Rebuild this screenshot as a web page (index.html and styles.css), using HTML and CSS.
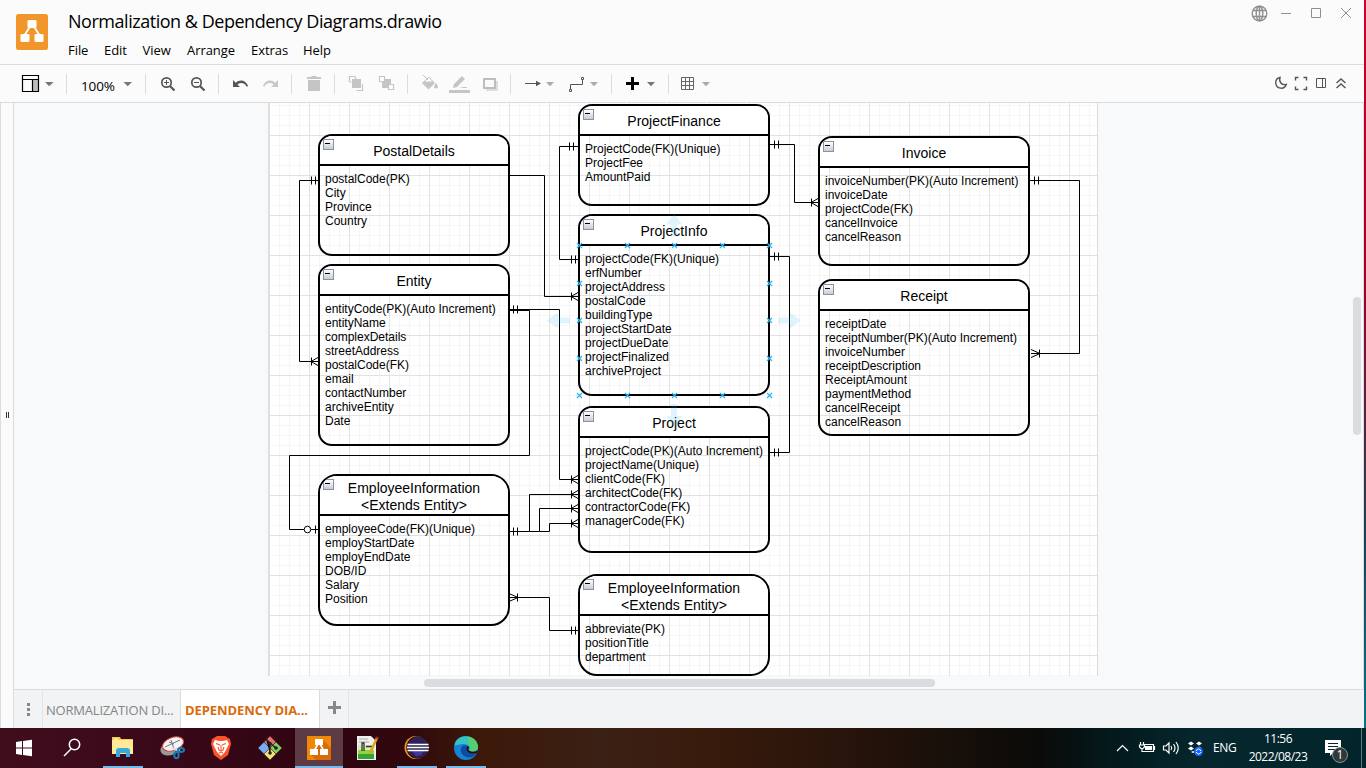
FILE: index.html
```html
<!DOCTYPE html>
<html lang="en">
<head>
<meta charset="utf-8">
<title>Normalization &amp; Dependency Diagrams.drawio</title>
<link rel="stylesheet" href="styles.css">
</head>
<body>
<div class="desktop">
<div class="window">
  <header class="header">
    <svg class="app-logo" width="32" height="36" viewBox="0 0 32 36"><rect width="32" height="36" rx="2.5" fill="#f2962b"/><path d="M15 11 8 22M17 11l7 11" stroke="#fff" stroke-width="1.8"/><rect x="11.5" y="6" width="9" height="8" rx="1.3" fill="#fff"/><rect x="4.500" y="20" width="9" height="8" rx="1.300" fill="#fff"/><rect x="18.500" y="20" width="9" height="8" rx="1.300" fill="#fff"/></svg>
    <div class="heading">
      <div class="doc-title">Normalization &amp; Dependency Diagrams.drawio</div>
      <nav class="menu"><span>File</span><span>Edit</span><span>View</span><span>Arrange</span><span>Extras</span><span>Help</span></nav>
    </div>
    <svg class="window-controls" width="114" height="30" viewBox="1250 0 114 30" fill="none" stroke="#8f8f8f">
      <g stroke-width="1.400"><circle cx="1259.500" cy="13.500" r="7.300"/><ellipse cx="1259.500" cy="13.500" rx="3.300" ry="7.300"/><path d="M1259.500 6v15M1253 10.500h13M1253 16.500h13"/></g>
      <path d="M1281 13.500h10M1311.500 8.500h9v9h-9zM1341 8l10 10M1351 8l-10 10"/>
    </svg>
  </header>

  <div class="toolbar">
    <div class="tool-group"><svg width="66" height="37" viewBox="0 65 66 37"><path d="M33 80h5v11h-5z" fill="#bbb"/><path d="M22.500 75.500h16v16h-16zM22.500 79.500h16M32.500 79.500v12" fill="none" stroke="#000" stroke-width="1.200"/><path d="m45 82 4.200 4.300L53.500 82z" fill="#777"/></svg></div>
    <div class="tool-group zoom-group"><span class="zoom-value">100%</span><svg width="20" height="37" viewBox="118 65 20 37"><path d="m123.500 82 4.200 4.300L132 82z" fill="#777"/></svg></div>
    <div class="tool-group"><svg width="72" height="37" viewBox="146 65 72 37" fill="none" stroke="#555"><g stroke-width="1.700"><circle cx="166.500" cy="82.500" r="4.700"/><path d="m170 86 4.500 4.500" stroke-width="2.200"/><path d="M164 82.500h5M166.500 80v5" stroke-width="1"/><circle cx="196.500" cy="82.500" r="4.700"/><path d="m200 86 4.500 4.500" stroke-width="2.200"/><path d="M194 82.500h5" stroke-width="1"/></g></svg></div>
    <div class="tool-group"><svg width="72" height="37" viewBox="219 65 72 37"><path d="M233 80v7h7l-2.600-2.600c3.400-2.500 7.400-1.600 9.300 2.300l1.400-.6c-2-6-8-7.300-12.400-3.400z" fill="#555"/><path d="M278 80v7h-7l2.600-2.600c-3.400-2.500-7.400-1.600-9.300 2.300l-1.400-.6c2-6 8-7.300 12.400-3.400z" fill="#c8c8c8"/></svg></div>
    <div class="tool-group"><svg width="42" height="37" viewBox="292 65 42 37"><path d="M307 77h4l1-1h4l1 1h4v2h-14zM308 80h12v11h-12z" fill="#c5c5c5"/></svg></div>
    <div class="tool-group"><svg width="72" height="37" viewBox="335 65 72 37"><path d="M352 79h9v9h-9z" fill="#c5c5c5"/><path d="M349.500 82v-5.500h6M362.500 84v6.500h-6M349.500 82h2M355.500 77v2" fill="none" stroke="#c5c5c5" stroke-width="1.200"/><path d="M382 79h9v9h-9z" fill="#c5c5c5"/><path d="M379.500 76.500h5v5h-5zM388.500 84.500h5v5h-5z" fill="#fff" stroke="#c5c5c5" stroke-width="1.200"/></svg></div>
    <div class="tool-group"><svg width="102" height="37" viewBox="408 65 102 37"><path d="m422 83 6.500-6 6.500 6-6.500 6.500zM436 83q4 5 0 5.500-4-.5 0-5.500" fill="#c5c5c5"/><path d="m423 75 5 5M424 82l5-5 4 5z" stroke="#c5c5c5" fill="#fff"/><path d="m453 88 1-4 8-8 3 3-8 8zM459 88l4-1h4v1zM449 90h21v3h-21z" fill="#c5c5c5"/><path d="M486 81h12v10h-12z" fill="#dedede"/><path d="M484 79h11v9h-11z" fill="#fafafa" stroke="#bdbdbd" stroke-width="2"/></svg></div>
    <div class="tool-group"><svg width="100" height="37" viewBox="511 65 100 37"><path d="M525 83.500h11M570.500 90v-5.500h12V79" fill="none" stroke="#555"/><path d="m536 80.700 5 2.800-5 2.800z" fill="#555"/><path d="M581.500 77.500h2v2h-2zM569.500 89.500h2v2h-2z" fill="#fff" stroke="#555"/><path d="m546 82 4 4.300 4-4.300zM590 82l4 4.300 4-4.300z" fill="#aaa"/></svg></div>
    <div class="tool-group"><svg width="56" height="37" viewBox="612 65 56 37"><path d="M632.500 77v13M626 83.500h13" stroke="#000" stroke-width="3"/><path d="m647 82 4 4.300 4-4.300z" fill="#777"/></svg></div>
    <div class="tool-group tool-last"><svg width="60" height="37" viewBox="669 65 60 37"><path d="M681.500 77.500h12v12h-12zM685.500 77.500v12M689.500 77.500v12M681.500 81.500h12M681.500 85.500h12" fill="none" stroke="#666"/><path d="m702 82 4 4.300 4-4.300z" fill="#aaa"/></svg></div>
    <svg class="view-tools" width="94" height="37" viewBox="1270 65 94 37" fill="none" stroke="#555" stroke-width="1.400"><path d="M1280 77.500a5.400 5.400 0 1 0 6.300 6.800c-4.500 1.500-7.800-2.600-6.300-6.800z"/><path d="M1295.500 80.500v-3h3M1303.500 77.500h3v3M1306.500 86.500v3h-3M1298.500 89.500h-3v-3"/><path d="M1316.500 78.500h9v9h-9zM1322.500 78.500v9" stroke-width="1"/><path d="m1336.500 83 4.500-4 4.500 4M1336.500 88l4.500-4 4.500 4"/></svg>
  </div>

  <div class="workspace">
    <div class="side-strip"><svg width="5" height="7" viewBox="0 0 5 7"><path d="M1.500 0v6M3.500 0v6" stroke="#333"/></svg></div>
    <div class="editor">
      <main class="canvas">
        <div class="page"></div>
        <div class="entity" style="left:304px;top:31px;width:192px;height:122px"><h2>PostalDetails</h2><p>postalCode(PK)<br>City<br>Province<br>Country</p></div>
        <div class="entity" style="left:304px;top:161px;width:192px;height:182px"><h2>Entity</h2><p>entityCode(PK)(Auto Increment)<br>entityName<br>complexDetails<br>streetAddress<br>postalCode(FK)<br>email<br>contactNumber<br>archiveEntity<br>Date</p></div>
        <div class="entity tall" style="left:304px;top:371px;width:192px;height:152px"><h2>EmployeeInformation<br>&lt;Extends Entity&gt;</h2><p>employeeCode(FK)(Unique)<br>employStartDate<br>employEndDate<br>DOB/ID<br>Salary<br>Position</p></div>
        <div class="entity" style="left:564px;top:1px;width:192px;height:102px"><h2>ProjectFinance</h2><p>ProjectCode(FK)(Unique)<br>ProjectFee<br>AmountPaid</p></div>
        <div class="entity" style="left:564px;top:111px;width:192px;height:182px"><h2>ProjectInfo</h2><p>projectCode(FK)(Unique)<br>erfNumber<br>projectAddress<br>postalCode<br>buildingType<br>projectStartDate<br>projectDueDate<br>projectFinalized<br>archiveProject</p></div>
        <div class="entity" style="left:564px;top:303px;width:192px;height:147px"><h2>Project</h2><p>projectCode(PK)(Auto Increment)<br>projectName(Unique)<br>clientCode(FK)<br>architectCode(FK)<br>contractorCode(FK)<br>managerCode(FK)</p></div>
        <div class="entity tall" style="left:564px;top:471px;width:192px;height:102px"><h2>EmployeeInformation<br>&lt;Extends Entity&gt;</h2><p>abbreviate(PK)<br>positionTitle<br>department</p></div>
        <div class="entity" style="left:804px;top:33px;width:212px;height:130px"><h2>Invoice</h2><p>invoiceNumber(PK)(Auto Increment)<br>invoiceDate<br>projectCode(FK)<br>cancelInvoice<br>cancelReason</p></div>
        <div class="entity" style="left:804px;top:176px;width:212px;height:157px"><h2>Receipt</h2><p>receiptDate<br>receiptNumber(PK)(Auto Increment)<br>invoiceNumber<br>receiptDescription<br>ReceiptAmount<br>paymentMethod<br>cancelReceipt<br>cancelReason</p></div>

        <svg class="wires" width="1350" height="586" viewBox="14 103 1350 586">
          <defs>
            <path id="one-left" d="M-6.500-4v8M-2.500-4v8"/>
            <path id="one-right" d="M4.500-4v8M8.500-4v8"/>
            <path id="many-left" d="M-6.500-4v8M-7 0l7-4M-7 0l7 4"/>
            <path id="many-right" d="M8.500-4v8M9 0 0-4M9 0 0 4"/>
            <path id="anchor" d="m-2.500-2.500 5 5M2.500-2.500l-5 5"/>
            <path id="arrow" d="M-11-3H1v-5L12 0 1 8V3h-12z"/>
          </defs>
          <g fill="none" stroke="#000">
            <path d="M318 180.500h-18.500v181H318M510 175.500h34.500v121H578M578 146.500h-18.500v113H578M770 144.500h24.500v58H818M1030 180.500h49.500v173H1031M770 256.500h19.500v196H770M510 309.500h49.500v170H578M510 310.500h19.500v145h-240v74H304M311 529.500h7M510 531.500h19.500v-37H578M529.500 531.500h10v-23H578M539.500 531.500h10v-8H578M510 597.500h39.500v33H578"/>
            <circle cx="307.500" cy="529.500" r="3.300"/><path d="M315.500 525.500v8"/>
            <use href="#one-left" x="318" y="180.500"/><use href="#one-left" x="576" y="146.500"/><use href="#one-left" x="578" y="259.500"/><use href="#one-left" x="578" y="630.500"/>
            <use href="#one-right" x="770" y="144.500"/><use href="#one-right" x="770" y="256.500"/><use href="#one-right" x="770" y="452.500"/><use href="#one-right" x="1030" y="180.500"/><use href="#one-right" x="509" y="309.500"/><use href="#one-right" x="509" y="531.500"/>
            <use href="#many-left" x="318" y="361.500"/><use href="#many-left" x="578" y="296.500"/><use href="#many-left" x="818" y="202.500"/><use href="#many-left" x="578" y="479.500"/><use href="#many-left" x="578" y="494.500"/><use href="#many-left" x="578" y="508.500"/><use href="#many-left" x="578" y="523.500"/>
            <use href="#many-right" x="1031" y="353.500"/><use href="#many-right" x="509" y="597.500"/>
          </g>
          <g stroke="#29b6f2" stroke-width="1.200">
            <use href="#anchor" x="579.500" y="245.500"/><use href="#anchor" x="627.500" y="245.500"/><use href="#anchor" x="674.500" y="245.500"/><use href="#anchor" x="722.500" y="245.500"/><use href="#anchor" x="769.500" y="245.500"/>
            <use href="#anchor" x="579.500" y="283.500"/><use href="#anchor" x="579.500" y="320.500"/><use href="#anchor" x="579.500" y="358.500"/><use href="#anchor" x="769.500" y="283.500"/><use href="#anchor" x="769.500" y="320.500"/><use href="#anchor" x="769.500" y="358.500"/>
            <use href="#anchor" x="579.500" y="395.500"/><use href="#anchor" x="627.500" y="395.500"/><use href="#anchor" x="674.500" y="395.500"/><use href="#anchor" x="722.500" y="395.500"/><use href="#anchor" x="769.500" y="395.500"/>
          </g>
          <g fill="#29b6f2" fill-opacity=".15"><use href="#arrow" transform="translate(789 320.500)"/><use href="#arrow" transform="translate(559 320.500) rotate(180)"/><use href="#arrow" transform="translate(674 225.500) rotate(-90)"/><use href="#arrow" transform="translate(674 415) rotate(90)"/></g>
        </svg>
        <div class="scroll-h"></div><div class="scroll-v"></div>
      </main>
      <footer class="tabs">
        <div class="tab-menu"><svg width="4" height="14" viewBox="0 0 4 14"><path d="M0 0h3v3H0zM0 5h3v3H0zM0 10h3v3H0z" fill="#888"/></svg></div>
        <div class="tab">NORMALIZATION DI...</div>
        <div class="tab active">DEPENDENCY DIA...</div>
        <div class="tab-add"><svg width="13" height="13" viewBox="0 0 13 13"><path d="M6.500 0v13M0 6.500h13" stroke="#888" stroke-width="3"/></svg></div>
      </footer>
    </div>
  </div>
</div>

<div class="taskbar">
  <div class="launchers">
    <div class="task"><svg viewBox="0 728 48 40"><path d="m16 742 6-.9v6.400h-6zM23 741l9-1.200v7.700h-9zM16 748.500h6v6.400l-6-.9zM23 748.500h9v7.700l-9-1.200z" fill="#fff"/></svg></div>
    <div class="task"><svg viewBox="48 728 48 40"><g fill="none" stroke="#fff" stroke-width="1.500"><circle cx="74.500" cy="744.500" r="5.200"/><path d="m71 749-7 7"/></g></svg></div>
    <div class="task running"><svg viewBox="99 728 48 40"><path d="M112 737h8l1 2h12v14h-21z" fill="#f4c94e"/><path d="M112 740h21v14h-21z" fill="#ffe896"/><path d="M116 757v-6q0-3 3-3h8q3 0 3 3v6h-4v-4h-6v4z" fill="#35a9e0"/><path d="M114 739h4" stroke="#fff"/></svg></div>
    <div class="task"><svg viewBox="148 728 48 40"><ellipse cx="171" cy="748" rx="11" ry="7" fill="#999" transform="rotate(-20 171 748)"/><ellipse cx="173" cy="744" rx="11" ry="6.500" fill="#f4f4f4" stroke="#d34242" transform="rotate(-20 173 744)"/><path d="m165 747 15-7M171 740l3 9M174 744l-5-2" stroke="#777"/><path d="M172 748l8 3" stroke="#ddd" stroke-width="2"/><g fill="none" stroke="#187bb5" stroke-width="2"><ellipse cx="181" cy="750" rx="3" ry="2"/><ellipse cx="176.500" cy="755" rx="2.200" ry="3.300"/></g></svg></div>
    <div class="task"><svg viewBox="197 728 48 40"><path d="m214 738 3-2h8l3 2 2 1 1 5-3 11-7 5-7-5-3-11 1-5z" fill="#fb542b"/><path d="m215 740 4 1h4l4-1 2 4-2 4-2 4-4 4-4-4-2-4-2-4z" fill="#fff"/><path d="m216 743.500 4 1.500M226 743.500l-4 1.500M221 745v5M218 747l1 3 2 1 2-1 1-3M219 753l2-1 2 1" stroke="#fb542b" stroke-width="1.100" fill="none"/></svg></div>
    <div class="task"><svg viewBox="246 728 48 40"><g stroke="#222" stroke-width=".5"><path d="m270 736 6 6-6 6-6-6z" fill="#ef6c73"/><path d="m264 742 6 6-6 6-6-6z" fill="#78aaf5"/><path d="m276 742 6 6-6 6-6-6z" fill="#83cc61"/><path d="m270 748 6 6-6 6-6-6z" fill="#f8df73"/></g><path d="m266 739 4 4v10M271 744l5 4" stroke="#222" stroke-width="1.500"/><g fill="#222"><circle cx="270" cy="743.500" r="1.800"/><circle cx="276" cy="748" r="1.800"/><circle cx="270" cy="753" r="1.800"/></g></svg></div>
    <div class="task running current"><svg viewBox="295 728 48 40"><path d="M307 736h24v24h-24z" fill="#f08705"/><path d="m322 739 9 9v12h-15l-5-5z" fill="#d96b08"/><path d="m318 744-4 7M320 744l4 7" stroke="#fff" stroke-width="1.700"/><path d="M315 739h8v6h-8zM310 749h8v6h-8zM320 749h8v6h-8z" fill="#fff"/></svg></div>
    <div class="task"><svg viewBox="343 728 48 40"><path d="M357 736h14l5 5v19h-19z" fill="#eef2ee"/><path d="M358 745h16v14h-16z" fill="#d5efac"/><path d="M358 750h16v8h-16z" fill="#96d142"/><path d="M358 754h16v5h-16z" fill="#36a535"/><path d="M359 739h9M359 742h10" stroke="#aaa"/><path d="M362 751v-8h2v8M366 746.500h7" stroke="#333" stroke-width="1.300" fill="none"/><path d="m377 738-7 15" stroke="#e0a223" stroke-width="2.500"/><path d="m377.500 737-.8 2" stroke="#a33" stroke-width="3"/></svg></div>
    <div class="task running"><svg viewBox="393 728 48 40"><circle cx="416" cy="747.500" r="11.500" fill="#f6951e"/><circle cx="417.500" cy="747.500" r="11.200" fill="#31080d"/><circle cx="418" cy="747.500" r="10.700" fill="#2c2255"/><path d="M412 751h12l-3 4-5 1z" fill="#493693"/><path d="M407.500 744.500h21M407 747.500h22M407.500 750.500h21" stroke="#fff" stroke-width="1.600"/></svg></div>
    <div class="task running"><svg viewBox="442 728 48 40"><circle cx="466" cy="748" r="12" fill="#1683d4"/><path d="M454.500 745c2-12 21-12 23.500 2 .5 5-6 6-9 3 2-3-1-6-6-6-4 0-7 2-8.500 1z" fill="#36c2c3"/><path d="M468 736.500c6 1 10 5 10 10.500-.5 5-6 6-9 3q3-4-1-6z" fill="#54cf70"/><path d="M477 753c-3 1-8 1-10-2-2-2-1-4 1-5-6-3-9 3-6 8 3 4 9 5 13 1z" fill="#0c4da2"/><path d="M477 753c-3 1-8 1-10-2q-2-3 1-5 2 2 0 3c2 4 7 3 10 1z" fill="#24100b"/></svg></div>
  </div>
  <div class="tray">
    <svg class="tray-icons" width="96" height="40" viewBox="1112 728 96 40"><g fill="none" stroke="#fff" stroke-width="1.200"><path d="m1117 751 5.500-5.500 5.500 5.500"/><path d="M1144 744.500h9.500v7H1143M1154.500 746v4M1140.500 742v3M1143.500 742v3M1139.500 745h5v2l-1.500 1.500h-2L1139.500 747zM1142 748v3.500h2M1163.500 746h2.500l3-3v10l-3-3h-2.500zM1171 746q1.500 2 0 4M1173.500 744q3 4 0 8M1176 742q4.500 6 0 12"/></g><path d="M1145 746h7v4h-7z" fill="#fff"/><path d="m1188 743.500 3-2 3 2-3 2zM1196 743.500l3-2 3 2-3 2zM1188 748.500l3-2 3 2-3 2zM1196 748.500l3-2 3 2-3 2zM1191 752l2-1 2 1-2 1z" fill="#fff"/><circle cx="1198.500" cy="751.500" r="4.500" fill="#1765ff"/><path d="M1196 751q2.500-4 5 0M1201 752q-2.500 4-5 0" stroke="#fff" fill="none"/></svg>
    <span class="lang">ENG</span>
    <div class="clock"><span>11:56</span><span>2022/08/23</span></div>
    <div class="notice"><svg width="20" height="18" viewBox="0 0 20 18"><path d="M0 0h16v13H8l-3 3v-3H0z" fill="#fff"/><path d="M3 3.500h10M3 6.500h10M3 9.500h7" stroke="#08272b"/></svg><span class="badge">1</span></div>
    <div class="show-desktop"></div>
  </div>
</div>
</div>
</body>
</html>
```
FILE: styles.css
```css
* { box-sizing: border-box; }
body { margin: 0; font-family: "Open Sans", "Noto Sans", sans-serif; color: #000; }
svg { display: block; }
.desktop { width: 1366px; height: 768px; overflow: hidden; display: flex; flex-direction: column; background: linear-gradient(#d0002a, #a00022 35%, #174154 70%, #007f91); }
.window { width: 1364px; height: 728px; display: flex; flex-direction: column; background: #fbfbfb; }

.header { height: 65px; display: flex; border-bottom: 1px solid #dadce0; flex: none; }
.app-logo { margin: 14px 20px 0 16px; flex: none; }
.heading { flex: 1; padding-top: 9px; }
.doc-title { font-size: 18px; line-height: 25px; white-space: nowrap; letter-spacing: -.47px; }
.menu { display: grid; grid-template-columns: 36px 38.500px 44.500px 64px 52px 40px; margin-top: 6px; font-size: 13px; line-height: 20px; letter-spacing: -.05px; }
.window-controls { flex: none; }

.toolbar { height: 38px; display: flex; border-bottom: 1px solid #dadce0; flex: none; }
.tool-group { display: flex; position: relative; }
.tool-group::after { content: ""; width: 1px; height: 20px; margin-top: 9px; background: #dadce0; }
.tool-last::after { display: none; }
.zoom-group { width: 79px; padding-left: 14px; }
.zoom-group svg { margin-left: 2px; flex: none; }
.zoom-group::after { margin-left: 7px; flex: none; }
.zoom-value { width: 35px; flex: none; font-size: 13.500px; line-height: 42px; letter-spacing: -.1px; }
.view-tools { margin-left: auto; }

.workspace { flex: 1; display: flex; min-height: 0; }
.side-strip { width: 14px; border-left: 1px solid #dadce0; border-right: 1px solid #dadce0; padding: 309px 0 0 4px; }
.editor { flex: 1; display: flex; flex-direction: column; }
.canvas { position: relative; height: 586px; flex: none; background: #f8f9fb; overflow: hidden; border-right: 1px solid #dadce0; }
.page {
  position: absolute; left: 254px; top: 0; width: 830px; height: 573px;
  border: 1px solid #dadce0; border-width: 0 1px;
  background-color: #fff;
  background-image:
    linear-gradient(90deg, #e2e2e2 1px, transparent 1px), linear-gradient(#e2e2e2 1px, transparent 1px),
    linear-gradient(90deg, #f6f6f6 1px, transparent 1px), linear-gradient(#f6f6f6 1px, transparent 1px);
  background-size: 40px 40px, 40px 40px, 10px 10px, 10px 10px;
  background-position: 40px 0, 0 32px, 0 0, 0 2px;
}
.entity { position: absolute; border: 2px solid #000; border-radius: 14px; font-family: "Liberation Sans", Arial, sans-serif; overflow: hidden; }
.entity h2 { margin: 0; height: 30px; padding-top: 7px; border-bottom: 2px solid #000; background: #fff; font-size: 14px; font-weight: 400; line-height: 17px; text-align: center; }
.entity p { margin: 0; padding: 6px 0 0 5px; font-size: 12px; line-height: 14px; white-space: nowrap; }
.entity::before { content: ""; position: absolute; left: 4px; top: 3px; width: 9px; height: 9px; border: 1px solid #8792a5; background: linear-gradient(#000, #000) 1px 3px / 5px 1px no-repeat, linear-gradient(#fff, #c9ccd4); margin-left: -1px; }
.entity.tall { border-radius: 19px; }
.entity.tall h2 { height: 40px; padding-top: 4px; }
.wires { position: absolute; left: 0; top: 0; }
.scroll-h { position: absolute; left: 410px; top: 576px; width: 511px; height: 8px; border-radius: 4px; background: #dadce0; }
.scroll-v { position: absolute; left: 1339px; top: 194px; width: 8px; height: 138px; border-radius: 4px; background: #dadce0; }

.tabs { height: 39px; flex: none; display: flex; background: #f1f3f4; border-top: 1px solid #dadce0; font-size: 13px; }
.tab-menu { width: 29px; padding: 13px 0 0 13px; border-right: 1px solid #e2e4e6; }
.tab { width: 138px; padding: 3px 0 0 3px; line-height: 35px; color: #858585; white-space: nowrap; letter-spacing: -.2px; border-right: 1px solid #dadce0; }
.tab.active { width: 139px; padding-left: 4px; background: #fff; color: #db6a0b; font-weight: 700; letter-spacing: -.07px; }
.tab-add { width: 29px; padding: 11px 0 0 8px; border-right: 1px solid #e2e4e6; }

.taskbar { height: 40px; display: flex; justify-content: space-between; color: #fff; background: linear-gradient(90deg, #400d1d 0, #390818 180px, #2e0510 330px, #30080c 410px, #3c1808 475px, #3b2015 600px, #391b0c 700px, #27140b 850px, #0a0b09 1040px, #03191c 1110px, #05272d 1200px, #02252b 1366px); }
.launchers { display: grid; grid-template-columns: 48px 51px repeat(4, 49px) 48px 50px 49px 49px; }
.task { display: flex; position: relative; width: 48px; }
.task svg { width: 48px; height: 40px; }
.running::after { content: ""; position: absolute; left: 4px; bottom: 0; width: 40px; height: 2px; background: #76b9ed; }
.current { background: #5d3b45; }
.current::after { left: 0; width: 48px; }
.tray { display: flex; width: 254px; font-size: 12px; }
.tray-icons { flex: none; }
.lang { width: 32px; padding-left: 5px; line-height: 40px; letter-spacing: -.4px; }
.clock { width: 76px; display: flex; flex-direction: column; align-items: center; line-height: 18px; padding-top: 2px; letter-spacing: -.5px; }
.notice { width: 45px; padding: 12px 0 0 9px; position: relative; }
.badge { position: absolute; left: 16px; top: 19px; width: 16px; height: 16px; border: 1px solid #8c9190; border-radius: 50%; background: #303939; line-height: 14px; text-align: center; }
.show-desktop { width: 5px; border-left: 1px solid #637b7e; }
```
